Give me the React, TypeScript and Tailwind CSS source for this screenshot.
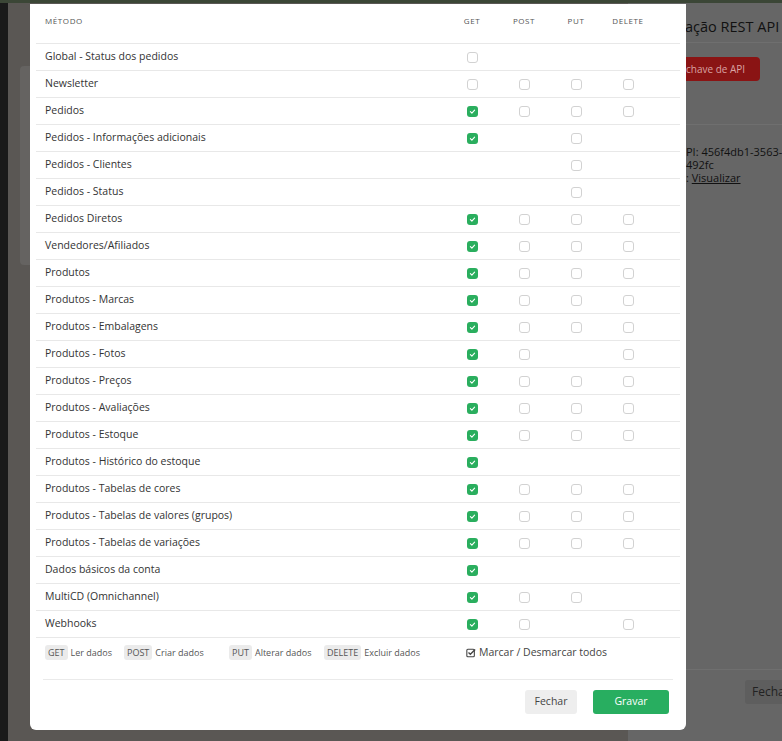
import React from 'react';

type Perm = { name: string; get?: 0 | 1; post?: boolean; put?: boolean; del?: boolean };

// get: 0 = unchecked box, 1 = checked box, undefined = no box
const rows: Perm[] = [
  { name: 'Global - Status dos pedidos', get: 0 },
  { name: 'Newsletter', get: 0, post: true, put: true, del: true },
  { name: 'Pedidos', get: 1, post: true, put: true, del: true },
  { name: 'Pedidos - Informações adicionais', get: 1, put: true },
  { name: 'Pedidos - Clientes', put: true },
  { name: 'Pedidos - Status', put: true },
  { name: 'Pedidos Diretos', get: 1, post: true, put: true, del: true },
  { name: 'Vendedores/Afiliados', get: 1, post: true, put: true, del: true },
  { name: 'Produtos', get: 1, post: true, put: true, del: true },
  { name: 'Produtos - Marcas', get: 1, post: true, put: true, del: true },
  { name: 'Produtos - Embalagens', get: 1, post: true, put: true, del: true },
  { name: 'Produtos - Fotos', get: 1, post: true, del: true },
  { name: 'Produtos - Preços', get: 1, post: true, put: true, del: true },
  { name: 'Produtos - Avaliações', get: 1, post: true, put: true, del: true },
  { name: 'Produtos - Estoque', get: 1, post: true, put: true, del: true },
  { name: 'Produtos - Histórico do estoque', get: 1 },
  { name: 'Produtos - Tabelas de cores', get: 1, post: true, put: true, del: true },
  { name: 'Produtos - Tabelas de valores (grupos)', get: 1, post: true, put: true, del: true },
  { name: 'Produtos - Tabelas de variações', get: 1, post: true, put: true, del: true },
  { name: 'Dados básicos da conta', get: 1 },
  { name: 'MultiCD (Omnichannel)', get: 1, post: true, put: true },
  { name: 'Webhooks', get: 1, post: true, del: true },
];

const Check = ({ checked }: { checked?: boolean }) =>
  checked ? (
    <span className="w-[11px] h-[11px] rounded-[3px] bg-[#2aae5e] flex items-center justify-center">
      <svg viewBox="0 0 10 10" className="w-[7px] h-[7px]">
        <path d="M2 5.2 4.1 7.2 8 3" fill="none" stroke="white" strokeWidth="1.6" strokeLinecap="round" strokeLinejoin="round" />
      </svg>
    </span>
  ) : (
    <span className="w-[11px] h-[11px] rounded-[3px] border border-[#d2d2d2] bg-white" />
  );

const Cell = ({ show, checked }: { show: boolean; checked?: boolean }) => (
  <div className="flex items-center justify-center">{show && <Check checked={checked} />}</div>
);

const Badge = ({ children }: { children: React.ReactNode }) => (
  <span className="bg-[#ebebeb] rounded-[3px] px-[3px] leading-[15px] text-[9px] text-[#555]">{children}</span>
);

const grid = 'grid grid-cols-[410px_52px_52px_52px_52px_26px]';

export default function App() {
  return (
    <div
      className="relative w-[782px] h-[741px] overflow-hidden bg-[#5a5754]"
      style={{ fontFamily: '"Open Sans", "Noto Sans", sans-serif' }}
    >
      {/* darkened page behind the modal */}
      <div className="h-[3px] bg-[#3b4636]" />
      <div className="flex h-[738px]">
        <div className="w-[8px] bg-[#1a1a1a]" />
        <div className="flex-1 flex flex-col pl-[12px] pt-[28px]">
          <div className="text-[#222] text-[14px] leading-[14px] pl-[6px]">⋮</div>
          <div className="mt-[21px] w-[400px] h-[199px] rounded-[4px] bg-[#656361]" />
        </div>
        <div className="w-[154px] bg-[#666666] flex flex-col whitespace-nowrap overflow-hidden">
          <div className="h-[40px] border-b border-[#6f6f6f] pl-[57px] pt-[14px] text-[14.5px] leading-[20px] font-medium text-[#111]">
            ação REST API
          </div>
          <div className="h-[82px] border-b border-[#6f6f6f] pl-[52px] pt-[14px]">
            <div className="w-[80px] h-[24px] rounded-[4px] bg-[#8a1414] pl-[6px] text-[10px] leading-[24px] text-[#d9a3a3]">
              chave de API
            </div>
          </div>
          <div className="pl-[58px] pt-[20px] text-[11px] leading-[13px] text-[#111]">
            <div>PI: 456f4db1-3563-43</div>
            <div>492fc</div>
            <div>
              : <span className="underline">Visualizar</span>
            </div>
          </div>
          <div className="mt-auto mb-[37px] border-t border-[#6f6f6f] pt-[10px] pl-[117px]">
            <div className="w-[60px] h-[24px] rounded-[3px] bg-[#5e5e5e] pl-[7px] text-[12px] leading-[24px] text-[#222]">
              Fechar
            </div>
          </div>
        </div>
      </div>

      {/* modal */}
      <div className="absolute left-[30px] top-[4px] w-[656px] bg-white rounded-b-[6px]">
        <div className="px-[6px]">
          <div className={`${grid} h-[39px] text-[8px] tracking-[0.6px] text-[#555] uppercase`}>
            <div className="pl-[9px] pt-[11px]">Método</div>
            <div className="text-center pt-[11px]">Get</div>
            <div className="text-center pt-[11px]">Post</div>
            <div className="text-center pt-[11px]">Put</div>
            <div className="text-center pt-[11px]">Delete</div>
            <div />
          </div>
          {rows.map((r) => (
            <div key={r.name} className={`${grid} h-[27px] border-t border-[#e8e8e8]`}>
              <div className="pl-[9px] flex items-center text-[10.5px] text-[#333]">{r.name}</div>
              <Cell show={r.get !== undefined} checked={r.get === 1} />
              <Cell show={!!r.post} />
              <Cell show={!!r.put} />
              <Cell show={!!r.del} />
              <div />
            </div>
          ))}
          <div className={`${grid} h-[30px] border-t border-[#e8e8e8]`}>
            <div className="pl-[9px] flex items-center text-[9px] text-[#555]">
              <div className="w-[79px] flex items-center gap-[3px]">
                <Badge>GET</Badge>Ler dados
              </div>
              <div className="w-[105px] flex items-center gap-[3px]">
                <Badge>POST</Badge>Criar dados
              </div>
              <div className="w-[95px] flex items-center gap-[3px]">
                <Badge>PUT</Badge>Alterar dados
              </div>
              <div className="flex items-center gap-[3px]">
                <Badge>DELETE</Badge>Excluir dados
              </div>
            </div>
            <div className="col-span-5 flex items-center pl-[20px] gap-[3px] text-[10.5px] text-[#444]">
              <svg viewBox="0 0 12 12" className="w-[10px] h-[10px]">
                <rect x="1" y="1.5" width="9" height="9" rx="1.2" fill="none" stroke="#444" strokeWidth="1.3" />
                <path d="M3 5.5 5.2 7.6 11 1.8" fill="none" stroke="#444" strokeWidth="1.6" />
              </svg>
              Marcar / Desmarcar todos
            </div>
          </div>
        </div>
        <div className="mx-[13px] mt-[12px] border-t border-[#eaeaea] pt-[10px] pb-[16px] pr-[4px] flex justify-end gap-[16px]">
          <button className="w-[52px] h-[24px] rounded-[3px] bg-[#eeeeee] text-[10.5px] text-[#444]">Fechar</button>
          <button className="w-[76px] h-[24px] rounded-[3px] bg-[#28ae60] text-[10.5px] text-white">Gravar</button>
        </div>
      </div>
    </div>
  );
}
